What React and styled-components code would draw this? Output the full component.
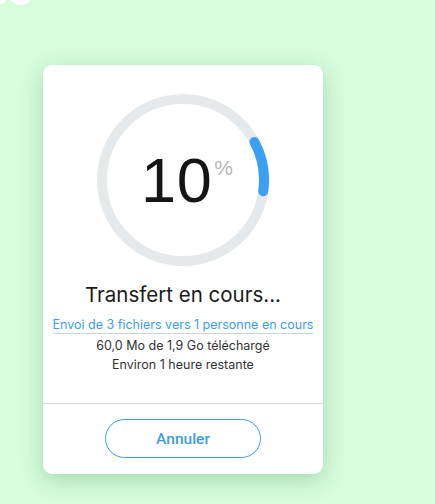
import React from 'react';
import styled, { createGlobalStyle } from 'styled-components';

const GlobalStyle = createGlobalStyle`
  html, body {
    margin: 0;
    padding: 0;
    background: #d7fddc;
  }
  body {
    font-family: 'Inter', 'Liberation Sans', sans-serif;
  }
`;

const Page = styled.main`
  position: relative;
  width: 435px;
  height: 504px;
  padding: 65px 0 0 43px;
  box-sizing: border-box;
  overflow: hidden;
`;

const LogoPeek = styled.svg`
  position: absolute;
  left: 0;
  top: -14px;
`;

const Card = styled.section`
  width: 280px;
  background: #fff;
  border-radius: 9px;
  box-shadow: 0 6px 22px rgba(50, 130, 70, 0.3);
  display: flex;
  flex-direction: column;
  align-items: center;
  overflow: hidden;
`;

const Body = styled.div`
  display: flex;
  flex-direction: column;
  align-items: center;
  padding: 29px 0 0;
  width: 100%;
`;

const Dial = styled.div`
  position: relative;
  width: 172px;
  height: 172px;
`;

const Readout = styled.div`
  position: absolute;
  inset: 0;
  display: flex;
  justify-content: center;
  align-items: center;
  padding-left: 8px;
  font-family: 'Liberation Sans', Arial, sans-serif;
  color: #151515;
`;

const Number = styled.span`
  font-size: 63px;
  line-height: 1;
  letter-spacing: 0.5px;
`;

const Percent = styled.sup`
  align-self: flex-start;
  margin-top: 62px;
  margin-left: 2px;
  font-size: 21px;
  color: #b8b8b8;
  vertical-align: baseline;
`;

const Title = styled.h1`
  margin: 17px 0 0;
  font-size: 20.5px;
  font-weight: 400;
  color: #1a1a1a;
  line-height: 24px;
`;

const Link = styled.a`
  margin-top: 9px;
  font-size: 12.5px;
  line-height: 17px;
  color: #3c9df0;
  text-decoration: none;
  border-bottom: 1px solid #cfd3d8;
`;

const Meta = styled.p`
  margin: ${(p) => p.$top || 0}px 0 0;
  font-size: 12.5px;
  line-height: 19px;
  color: #333;
`;

const Footer = styled.footer`
  width: 100%;
  margin-top: 29px;
  border-top: 1px solid #d8d8d8;
  display: flex;
  justify-content: center;
  padding: 15px 0 16px;
`;

const Button = styled.button`
  width: 156px;
  height: 39px;
  border-radius: 20px;
  border: 1px solid #3c9df0;
  background: #fff;
  color: #3c9df0;
  font-family: Roboto, 'Liberation Sans', Arial, sans-serif;
  font-weight: 500;
  font-size: 15.5px;
  cursor: pointer;
`;

const ProgressRing = ({ value }) => {
  const r = 81;
  const c = 86;
  const start = 62;
  const end = start + value * 3.6;
  const pt = (deg) => {
    const a = (deg * Math.PI) / 180;
    return [c + r * Math.sin(a), c - r * Math.cos(a)];
  };
  const [x1, y1] = pt(start);
  const [x2, y2] = pt(end);
  return (
    <svg width="172" height="172" viewBox="0 0 172 172">
      <circle cx={c} cy={c} r={r} fill="none" stroke="#e6e9ec" strokeWidth="10" />
      <path
        d={`M ${x1} ${y1} A ${r} ${r} 0 0 1 ${x2} ${y2}`}
        fill="none"
        stroke="#3aa0f4"
        strokeWidth="10"
        strokeLinecap="round"
      />
    </svg>
  );
};

const App = () => (
  <>
    <GlobalStyle />
    <Page>
      <LogoPeek width="40" height="20" viewBox="0 0 40 20">
        <ellipse cx="1" cy="12" rx="5" ry="6" fill="#fff" />
        <ellipse cx="21" cy="12" rx="10" ry="7" fill="#fff" />
      </LogoPeek>
      <Card>
        <Body>
          <Dial>
            <ProgressRing value={10} />
            <Readout>
              <Number>10</Number>
              <Percent>%</Percent>
            </Readout>
          </Dial>
          <Title>Transfert en cours...</Title>
          <Link href="#">Envoi de 3 fichiers vers 1 personne en cours</Link>
          <Meta $top={2}>60,0 Mo de 1,9 Go téléchargé</Meta>
          <Meta>Environ 1 heure restante</Meta>
        </Body>
        <Footer>
          <Button>Annuler</Button>
        </Footer>
      </Card>
    </Page>
  </>
);

export default App;
